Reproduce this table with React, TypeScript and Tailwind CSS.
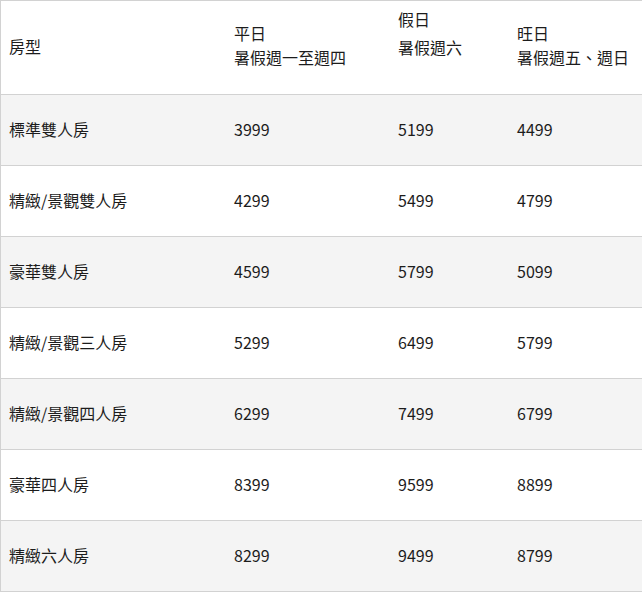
import React from 'react';

const rows: [string, string, string, string][] = [
  ['標準雙人房', '3999', '5199', '4499'],
  ['精緻/景觀雙人房', '4299', '5499', '4799'],
  ['豪華雙人房', '4599', '5799', '5099'],
  ['精緻/景觀三人房', '5299', '6499', '5799'],
  ['精緻/景觀四人房', '6299', '7499', '6799'],
  ['豪華四人房', '8399', '9599', '8899'],
  ['精緻六人房', '8299', '9499', '8799'],
];

const cols = 'grid grid-cols-[225px_164px_119px_1fr]';

const App: React.FC = () => {
  return (
    <div
      className="w-[642px] h-[592px] bg-white text-[16px] text-[#1c1c1c] overflow-hidden"
      style={{ fontFamily: '"Noto Sans CJK TC", "Noto Sans", sans-serif' }}
    >
      <div className="border-l border-t border-[#d2d2d2] w-[660px]">
        <div className={`${cols} h-[94px] border-b border-[#d2d2d2] leading-[24px]`}>
          <div className="flex items-center pl-2 pb-[3px]">房型</div>
          <div className="pl-2 pt-[20px]">
            <div>平日</div>
            <div>暑假週一至週四</div>
          </div>
          <div className="pl-2 pt-[6px]">
            <div>假日</div>
            <div className="mt-[4px]">暑假週六</div>
          </div>
          <div className="pl-2 pt-[20px]">
            <div>旺日</div>
            <div>暑假週五、週日</div>
          </div>
        </div>
        {rows.map((r, i) => (
          <div
            key={r[0]}
            className={`${cols} h-[71px] border-b border-[#d2d2d2] ${i % 2 === 0 ? 'bg-[#f4f4f4]' : 'bg-white'}`}
          >
            {r.map((c, j) => (
              <div key={j} className="flex items-center pl-2 pb-[3px]">
                {c}
              </div>
            ))}
          </div>
        ))}
      </div>
    </div>
  );
};

export default App;
